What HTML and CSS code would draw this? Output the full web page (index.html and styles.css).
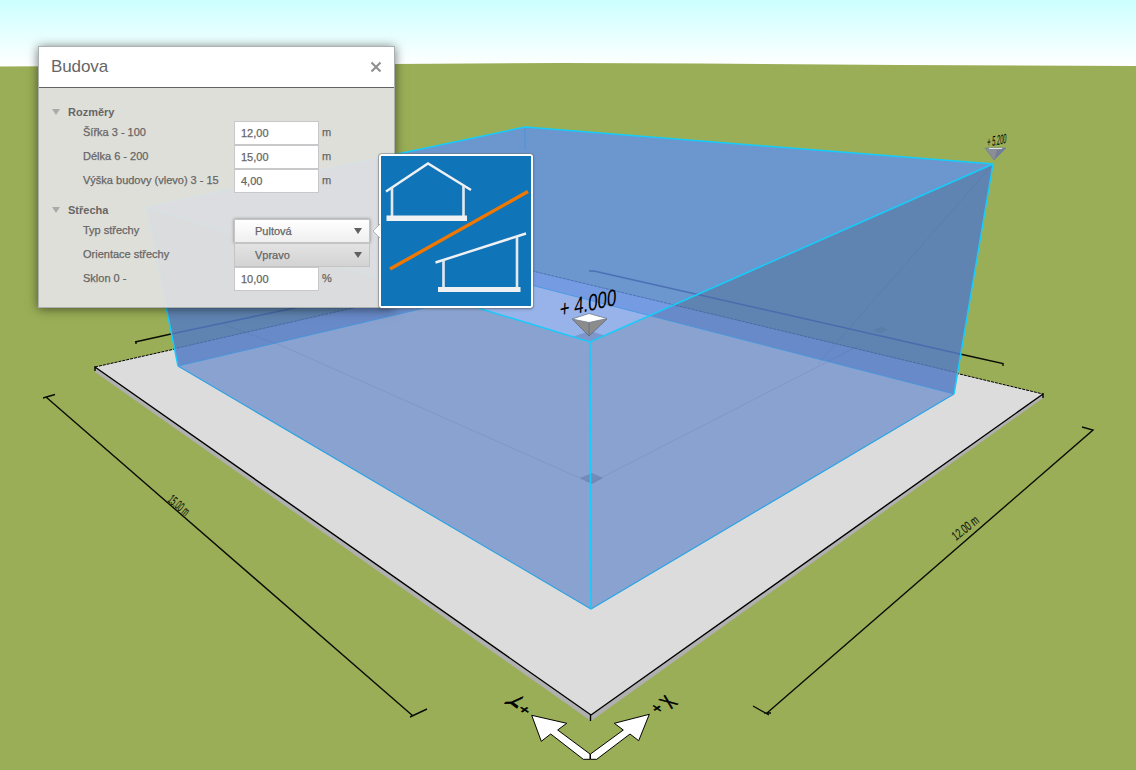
FILE: index.html
```
<!DOCTYPE html>
<html lang="cs">
<head>
<meta charset="utf-8">
<title>Budova</title>
<link rel="stylesheet" href="styles.css">
</head>
<body>
<main class="viewport">
<svg class="scene" viewBox="0 0 1136 770" width="1136" height="770">
  <defs>
    <linearGradient id="sky" x1="0" y1="0" x2="0" y2="1">
      <stop offset="0" stop-color="#ccffff"/><stop offset="1" stop-color="#ffffff"/>
    </linearGradient>
    <clipPath id="roofClip"><path d="M146 207L525 127L993 164L590 342Z"/></clipPath>
    <clipPath id="wallClip"><path d="M146 207L590 342L993 164L954 394L591 609L178 366Z"/></clipPath>
  </defs>
  <rect width="1136" height="66" fill="url(#sky)"/>
  <path class="grass" d="M0 66.500L200 65.500L395 64L560 63L700 63.500L900 65L1136 66V770H0Z"/>
  <path class="slab-side" d="M95 367L591 715L1043 394V398L591 721L95 372Z"/>
  <path class="slab" d="M95 367L525 270L1043 394L591 715Z"/>
  <path class="edge dotted" d="M95 367L525 270L1043 394"/>
  <path class="edge" d="M95 371V367L591 715L1043 394V398M590.500 715V721"/>

  <path class="roof" d="M146 207L525 127L993 164L590 342Z"/>
  <path class="wall" d="M146 207L590 342L993 164L954 394L591 609L178 366Z"/>
  <g clip-path="url(#roofClip)">
    <path class="roof-slab" d="M95 367L524 269L1043 394L591 715Z"/>
    <path class="roof-floor" d="M178 366L527 284L954 394L591 609Z"/>
    <path class="hidden-shade" d="M572 337L590 331L609 337L590 343Z"/>
  </g>
  <g clip-path="url(#wallClip)">
    <path class="wall-slab" d="M95 367L524 269L1043 394L591 715Z"/>
    <path class="wall-floor" d="M178 366L527 284L954 394L591 609Z"/>
    <path class="faint" d="M993 164L818 364M280 345L591 483L860 345M225 325L280 345"/>
    <path class="hidden-shade" d="M580 478L592 473L603 478L592 484Z"/>
    <path class="hidden-shade soft" d="M873 330L882 327L888 330L880 333Z"/>
  </g>
  <path class="slab-inner" d="M173 349L524 269L958 373"/>
  <path class="floor-line" d="M178 366L527 284L954 394M525 127V150"/>
  <path class="back-dim" d="M171 334L480 269M589 271L594 271L960 354"/>
  <path class="dim" d="M135 342L171 334M136 341V344M960 354L1003 363.500V366"/>
  <path class="base" d="M178 366L591 609L954 394"/>
  <path class="glow" d="M178 366L146 207L525 127L993 164L954 394M146 207L590 342L993 164M590 342L591 609"/>

  <path class="dim" d="M43 398L55 394.500M46 397L413 716M410 717L427 709"/>
  <path class="dim" d="M1082 427L1093 430L767 713M753 706L769 715M764 713L771 713"/>

  <path class="marker-side" d="M572 319L589 336L607 319L589 314Z"/>
  <path class="marker-line" d="M589 322V335M572 319L589 336L607 319"/>
  <path class="marker-top" d="M572 319L589 313.500L607 318.500L589 322.500Z"/>
  <path class="marker-far" d="M985 148L994 160L1006 148Z"/>
  <path class="marker-far-dark" d="M997 150L1006 148L994 160Z"/>
  <path class="marker-far-top" d="M989 148.500H1002"/>

  <path class="axis" d="M531.700 715.300L566.700 723.300L557.700 730L590 754L590 759.300H583.300L550.700 734L541.300 741.300ZM649.300 714.300L614.300 723.300L623.300 730L590.500 754V759.300H596.700L630 734L638.700 740.700Z"/>

  <text class="mark" font-size="22" transform="matrix(.765 -.17 -.04 1.07 559.5 317.5)">+ 4.000</text>
  <text class="mark" font-size="14" transform="matrix(.41 -.08 -.05 1 987 147)">+ 5.200</text>
  <text class="mark small" font-size="12" transform="matrix(.42 .36 -.7 .85 167 501)">15.00 m</text>
  <text class="mark small" font-size="12" transform="matrix(.55 -.44 .65 .85 956 541)">12.00 m</text>
  <text class="mark mid" font-size="16" transform="matrix(.65 -.5 1.16 .8 674.6 706.3)">X</text>
  <text class="mark mid" font-size="16" transform="matrix(.7 -.5 .9 .65 661.7 711.7)">+</text>
  <text class="mark mid" font-size="16" transform="matrix(-.6 1.15 -1.35 .05 505 703)">Y</text>
  <text class="mark mid" font-size="16" transform="matrix(-.7 .55 -.9 -.6 519.7 706.5)">+</text>
</svg>

<section class="panel">
  <header class="panel-head">
    <h1 class="panel-title">Budova</h1>
    <svg class="close" width="12" height="12" viewBox="0 0 12 12"><path d="M1.500 1.500L10.500 10.500M10.500 1.500L1.500 10.500"/></svg>
  </header>
  <div class="panel-body">
    <h2 class="group"><span class="caret"></span>Rozměry</h2>
    <div class="row"><span class="label">Šířka 3 - 100</span><span class="field">12,00</span><span class="unit">m</span></div>
    <div class="row"><span class="label">Délka 6 - 200</span><span class="field">15,00</span><span class="unit">m</span></div>
    <div class="row"><span class="label">Výška budovy (vlevo) 3 - 15</span><span class="field">4,00</span><span class="unit">m</span></div>
    <h2 class="group second"><span class="caret"></span>Střecha</h2>
    <div class="row"><span class="label">Typ střechy</span><span class="select active">Pultová<i class="arrow"></i></span></div>
    <div class="row"><span class="label">Orientace střechy</span><span class="select">Vpravo<i class="arrow"></i></span></div>
    <div class="row"><span class="label">Sklon 0 -</span><span class="field">10,00</span><span class="unit">%</span></div>
  </div>
</section>

<aside class="tip">
  <svg class="tip-arrow" width="8" height="16" viewBox="0 0 8 16"><path d="M8 1L1 8L8 15"/></svg>
  <svg class="tip-art" width="150" height="150" viewBox="0 0 150 150">
    <rect width="150" height="150" fill="#1074b9"/>
    <path class="thin" d="M5 35.500L47 7.500L90 34"/>
    <path class="post" d="M11 31V62M82.500 30V62"/>
    <path class="solid" d="M5.500 59.500H86V65H5.500Z"/>
    <path class="thin" d="M54.500 106.500L145 77.500"/>
    <path class="post" d="M62.500 104V132M136 80V132"/>
    <path class="solid" d="M57 131H139.500V136H57Z"/>
    <path class="slash" d="M9 113L147 35.500"/>
  </svg>
</aside>
</main>
</body>
</html>
```
FILE: styles.css
```
body { margin: 0; font-family: "Liberation Sans", Arial, sans-serif; }
.viewport { position: relative; width: 1136px; height: 770px; overflow: hidden; }
.scene { display: block; }

/* 3D scene */
.grass { fill: #9aae57; }
.slab-side { fill: #b0b0b0; }
.slab { fill: #dcdcdc; }
.edge { fill: none; stroke: #000; stroke-width: 1.4; }
.dotted { stroke-width: 1; stroke-dasharray: 3 1; }
.roof { fill: #6b96ce; }
.wall { fill: #5f84b1; }
.roof-slab { fill: #759ce3; }
.roof-floor { fill: #98b2ea; }
.wall-slab { fill: #688ac8; }
.wall-floor { fill: #8aa2cf; }
.hidden-shade { fill: #4b6293; opacity: .35; }
.soft { opacity: .22; }
.faint { fill: none; stroke: #40609a; stroke-width: 1; opacity: .15; }
.slab-inner { fill: none; stroke: #3c5e9c; stroke-width: 1; opacity: .65; stroke-dasharray: 3 1; }
.floor-line { fill: none; stroke: #3d97e0; stroke-width: 1; opacity: .75; }
.back-dim { fill: none; stroke: #4467ad; stroke-width: 1.5; opacity: .8; }
.base { fill: none; stroke: #30a5e4; stroke-width: 1.2; }
.glow { fill: none; stroke: #16ccfb; stroke-width: 1.5; }
.dim { fill: none; stroke: #0a0d04; stroke-width: 1.4; }
.marker-side { fill: #8c8c8c; }
.marker-line { fill: none; stroke: #5c6e84; stroke-width: .9; }
.marker-top { fill: #fff; stroke: #6e7d90; stroke-width: .8; }
.marker-far { fill: #8b8e95; stroke: #74819c; stroke-width: .8; }
.marker-far-dark { fill: #747e96; }
.marker-far-top { stroke: #dde2ea; stroke-width: 1; }
.axis { fill: #fff; stroke: #000; stroke-width: 1; }
.mark { fill: #000; white-space: pre; }
.small { fill: #15190b; stroke: #15190b; stroke-width: .15; }
.mid { text-anchor: middle; stroke: #000; stroke-width: .6; }

/* Settings panel */
.panel {
  position: absolute; left: 38px; top: 46px; width: 357px; height: 262px;
  box-sizing: border-box; border: 1px solid #aab1b0;
  box-shadow: 0 1px 10px rgba(0, 0, 0, .55); color: #666;
  display: flex; flex-direction: column;
}
.panel-head {
  height: 40px; flex: none; background: #fff; border-bottom: 1px solid #606266;
  display: flex; align-items: center; justify-content: space-between;
  padding: 0 12px 0 12px;
}
.panel-title { margin: 0; font-size: 17px; font-weight: 400; line-height: 38px; letter-spacing: -.1px; }
.close { stroke: #8f8f8f; stroke-width: 2.1; fill: none; }
.panel-body {
  flex: 1; padding: 15px 0 0 12px; background: rgba(226, 225, 224, .945);
  font-size: 11px;
}
.group {
  display: flex; align-items: center; height: 18px; margin: 0;
  font-size: 11px; font-weight: 700;
}
.second { margin-top: 8px; }
.caret {
  width: 0; height: 0; margin: 0 8px 0 1px;
  border: 4px solid transparent; border-top: 6px solid #aaa; border-bottom: 0;
}
.row { display: flex; height: 24px; padding-left: 32px; }
.label, .field, .unit, .select { -webkit-text-stroke: .25px #666; }
.label { width: 151px; line-height: 23px; white-space: nowrap; }
.field {
  width: 85px; height: 24px; box-sizing: border-box; padding-left: 6px;
  border: 1px solid #c8c8ca; background: #fff; line-height: 23px;
}
.unit { padding-left: 3px; line-height: 23px; }
.select {
  display: flex; align-items: center; justify-content: space-between;
  width: 136px; height: 24px; box-sizing: border-box; padding: 0 7px 0 20px;
  border: 1px solid #c4c4c4; background: linear-gradient(#e3e3e3, #d3d3d3);
}
.active { background: linear-gradient(#fff, #efefef); box-shadow: 0 0 3px rgba(0, 0, 0, .4); }
.arrow { border: 4px solid transparent; border-top: 6px solid #606060; border-bottom: 0; }

/* Roof type preview */
.tip {
  position: absolute; left: 379px; top: 154px; width: 150px; height: 150px;
  border: 2px solid #fff; border-radius: 3px; background: #fff;
  box-shadow: 0 0 0 1px rgba(110, 120, 130, .5), 0 1px 3px rgba(0, 0, 0, .3);
}
.tip-art { display: block; }
.tip-arrow { position: absolute; left: -9px; top: 67px; fill: #fff; stroke: #b4b7ba; stroke-width: 1; }
.thin { fill: none; stroke: #f0f1f2; stroke-width: 2.4; }
.post { fill: none; stroke: #e4e9ee; stroke-width: 2.6; }
.solid { fill: #f0f1f2; }
.slash { fill: none; stroke: #f07800; stroke-width: 3.4; }
```
